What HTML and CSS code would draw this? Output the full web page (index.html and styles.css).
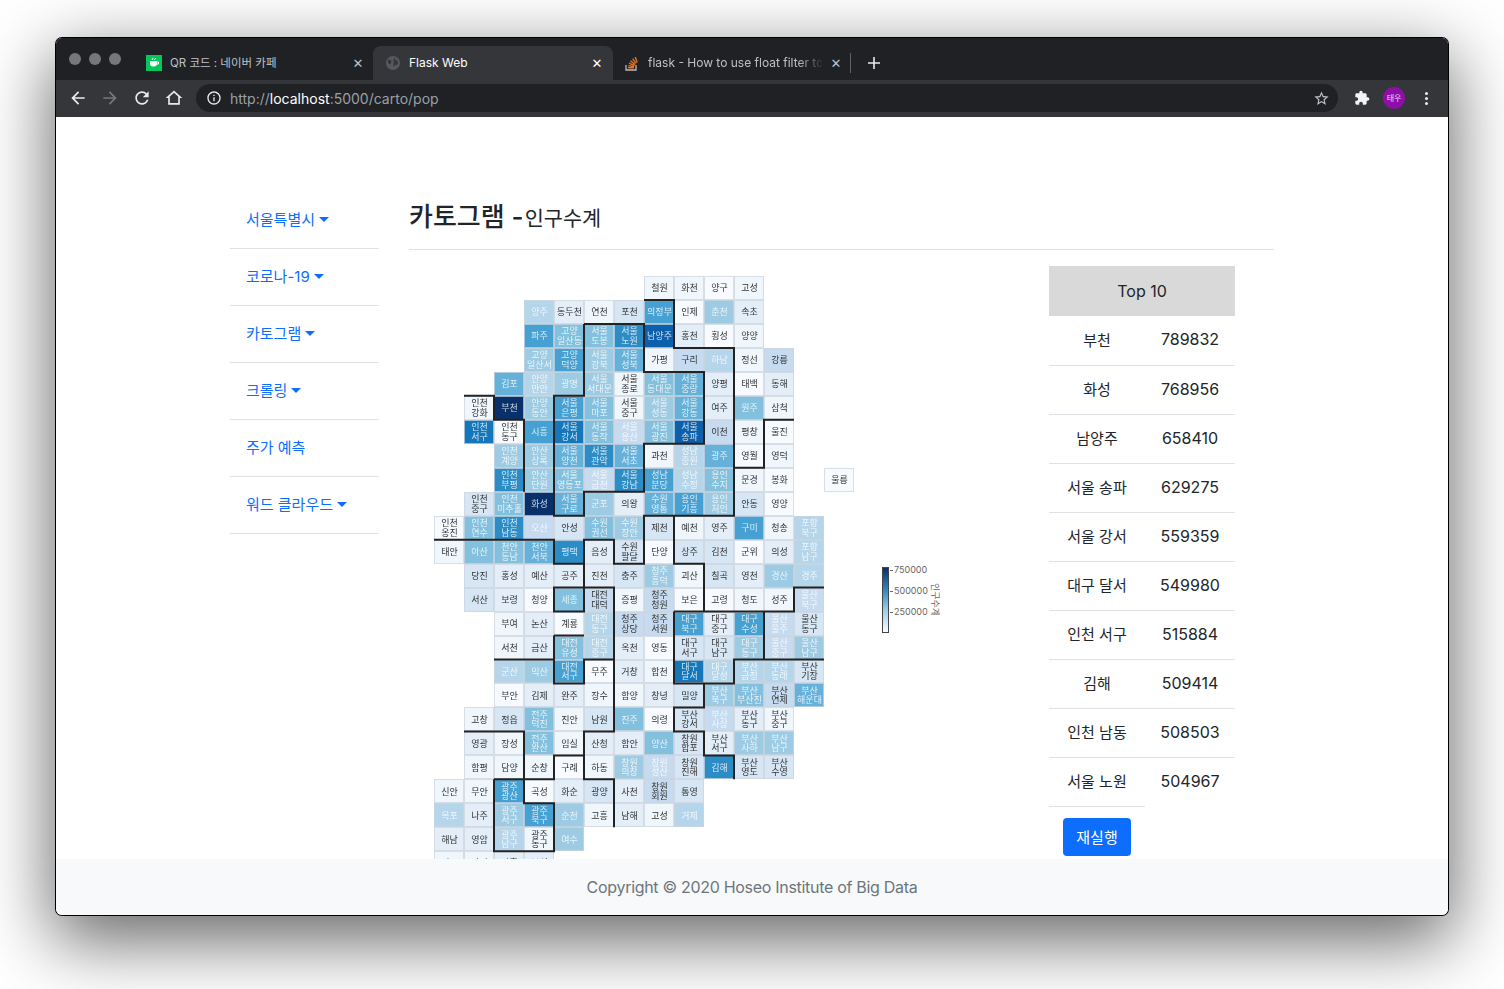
FILE: index.html
```html
<!DOCTYPE html>
<html>
  <head>
    <title>Flask Web</title>
    <link rel="stylesheet" href="styles.css">
  </head>
  <body>
    <div class="window">
      <div class="tabstrip">
        <div class="lights"><span></span><span></span><span></span></div>
        <div class="tab tab-first">
          <svg class="favicon" viewBox="0 0 16 16"><rect width="16" height="16" fill="#03c75a"/><path d="M4 6h7v2.500a3 3 0 0 1-3 3H7a3 3 0 0 1-3-3z" fill="#fff"/><path d="M11 7h1.500v2H11M6 5c0-1 1-1 1-2M8.500 5c0-1 1-1 1-2" fill="none" stroke="#fff"/></svg>
          <span class="tab-title">QR 코드 : 네이버 카페</span>
          <span class="tab-close">&#x2715;</span>
        </div>
        <div class="tab tab-active">
          <svg class="favicon" viewBox="0 0 16 16"><circle cx="8" cy="8" r="7" fill="#55585c"/><path d="M3 5c3-1 4 1 3 3s-2 1-3 0M8 14c0-3 1-4 3-4s2-2 2-3-3-2-4-5" fill="#35363a"/></svg>
          <span class="tab-title">Flask Web</span>
          <span class="tab-close">&#x2715;</span>
        </div>
        <div class="tab tab-last">
          <svg class="favicon" viewBox="0 0 16 16"><path d="M2 10v5h10v-5" fill="none" stroke="#bcbbbb" stroke-width="1.300"/><path d="M4 12.800h6M4.300 10.600l5.800 1.200M5 8.200l5.400 2.500M6.500 5.800l4.600 3.800M8.600 3.700l3.400 4.700M11.200 2l2 5.400" stroke="#e8701a" stroke-width="1.400" fill="none"/></svg>
          <span class="tab-title tab-fade">flask - How to use float filter to</span>
          <span class="tab-close">&#x2715;</span>
        </div>
        <svg class="newtab" viewBox="0 0 12 12"><path d="M6 0v12M0 6h12" stroke="#e8eaed" stroke-width="1.600"/></svg>
      </div>
      <div class="toolbar">
        <svg class="tool" viewBox="0 0 24 24"><path fill="#e8eaed" d="M20 11H7.830l5.590-5.590L12 4l-8 8 8 8 1.410-1.410L7.830 13H20v-2z"/></svg>
        <svg class="tool" viewBox="0 0 24 24"><path fill="#77787b" d="M12 4l-1.410 1.410L16.170 11H4v2h12.170l-5.580 5.590L12 20l8-8z"/></svg>
        <svg class="tool" viewBox="0 0 24 24"><path fill="#e8eaed" d="M17.650 6.350C16.200 4.900 14.210 4 12 4c-4.420 0-7.990 3.580-7.990 8s3.570 8 7.990 8c3.730 0 6.840-2.550 7.730-6h-2.080c-.82 2.330-3.040 4-5.650 4-3.310 0-6-2.690-6-6s2.690-6 6-6c1.660 0 3.140.69 4.220 1.780L13 11h7V4l-2.350 2.350z"/></svg>
        <svg class="tool" viewBox="0 0 24 24"><path fill="#e8eaed" d="M12 5.690l5 4.500V18H7v-7.810l5-4.500M12 3L2 12h3v8h14v-8h3L12 3z"/></svg>
        <div class="omnibox">
          <svg class="omni-icon" viewBox="0 0 24 24"><path fill="#e8eaed" d="M11 7h2v2h-2zm0 4h2v6h-2zm1-9C6.480 2 2 6.480 2 12s4.480 10 10 10 10-4.480 10-10S17.520 2 12 2zm0 18c-4.410 0-8-3.590-8-8s3.590-8 8-8 8 3.590 8 8-3.590 8-8 8z"/></svg>
          <span class="url">http://<b>localhost</b>:5000/carto/pop</span>
          <svg class="omni-star" viewBox="0 0 24 24"><path fill="#bdc1c6" d="M22 9.240l-7.190-.62L12 2 9.190 8.630 2 9.240l5.460 4.730L5.820 21 12 17.270 18.180 21l-1.630-7.030L22 9.240zM12 15.400l-3.760 2.270 1-4.280-3.320-2.880 4.380-.38L12 6.100l1.710 4.040 4.380.38-3.320 2.880 1 4.280L12 15.400z"/></svg>
        </div>
        <svg class="puzzle" viewBox="0 0 24 24"><path fill="#f1f3f4" d="M20.500 11H19V7c0-1.100-.9-2-2-2h-4V3.500C13 2.120 11.880 1 10.500 1S8 2.120 8 3.500V5H4c-1.100 0-1.990.9-1.990 2v3.800H3.500c1.490 0 2.700 1.210 2.700 2.700s-1.210 2.700-2.700 2.700H2V20c0 1.100.9 2 2 2h3.800v-1.500c0-1.490 1.210-2.700 2.700-2.700 1.490 0 2.700 1.210 2.700 2.700V22H17c1.100 0 2-.9 2-2v-4h1.500c1.380 0 2.500-1.120 2.500-2.500S21.880 11 20.500 11z"/></svg>
        <span class="avatar">태우</span>
        <span class="dots"><i></i><i></i><i></i></span>
      </div>

      <div class="page">
        <div class="main">
          <ul class="sidenav">
            <li><a class="caret">서울특별시</a></li>
            <li><a class="caret">코로나-19</a></li>
            <li><a class="caret">카토그램</a></li>
            <li><a class="caret">크롤링</a></li>
            <li><a>주가 예측</a></li>
            <li><a class="caret">워드 클라우드</a></li>
          </ul>
          <div class="content">
            <h2 class="title">카토그램 -<small>인구수계</small></h2>
            <div class="columns">
              <div class="map">
                <div class="grid" id="grid"></div>
                <svg class="borders" viewBox="0 0 14 25" preserveAspectRatio="none">
                  <path d="M7 1H8V3H10V10H8V12H9V14M8 14H12V13H13M8 14V17H10V16H13M11 14V16M10 8H11V6H12
                           M5 2H7V4H9V7H7V9H5V10H4V5H5V2M1 5H2V6H3V9
                           M0 11H4V12H5V11H6V12H7V10H8M5 11V14H4V13H6V16
                           M4 15H5M4 15V17H5V16H6V19H5V21H6V23M2 16H4
                           M1 19H3V21H4V20H5M2 21H3V22H4V24H2V21M9 17V18H8V19H9V20H10V21"/>
                </svg>
                <div class="legend">
                  <div class="legend-bar"></div>
                  <div class="legend-ticks">
                    <span>750000</span>
                    <span>500000</span>
                    <span>250000</span>
                  </div>
                  <div class="legend-title">인구수계</div>
                </div>
              </div>
              <table class="top">
                <colgroup>
                  <col class="col-name">
                  <col class="col-value">
                </colgroup>
                <thead>
                  <tr><th colspan="2">Top 10</th></tr>
                </thead>
                <tbody>
                  <tr><td>부천</td><td>789832</td></tr>
                  <tr><td>화성</td><td>768956</td></tr>
                  <tr><td>남양주</td><td>658410</td></tr>
                  <tr><td>서울 송파</td><td>629275</td></tr>
                  <tr><td>서울 강서</td><td>559359</td></tr>
                  <tr><td>대구 달서</td><td>549980</td></tr>
                  <tr><td>인천 서구</td><td>515884</td></tr>
                  <tr><td>김해</td><td>509414</td></tr>
                  <tr><td>인천 남동</td><td>508503</td></tr>
                  <tr class="last"><td>서울 노원</td><td>504967</td></tr>
                  <tr class="action"><td><button type="button">재실행</button></td><td></td></tr>
                </tbody>
              </table>
            </div>
          </div>
        </div>
        <div class="footer">Copyright © 2020 Hoseo Institute of Big Data</div>
      </div>
    </div>
    <script src="map.js"></script>
  </body>
</html>
```

FILE: styles.css
```css
* {
  box-sizing: border-box;
}
body {
  margin: 0;
  padding: 38px 56px 0;
  height: 989px;
  overflow: hidden;
  background-color: #ffffff;
  font-family: Inter, "Noto Sans CJK KR", sans-serif;
}
.window {
  height: 877px;
  display: flex;
  flex-direction: column;
  border-radius: 6px;
  overflow: hidden;
  background-color: #ffffff;
  box-shadow: 0 0 0 1px #000000, 0 22px 70px 4px rgba(0, 0, 0, 0.6);
}
.tabstrip {
  height: 42px;
  flex: none;
  display: flex;
  align-items: flex-end;
  background-color: #202124;
  position: relative;
}
.lights {
  width: 74px;
  height: 42px;
  flex: none;
  display: flex;
  gap: 8px;
  padding: 15px 0 0 13px;
}
.lights span {
  width: 12px;
  height: 12px;
  border-radius: 50%;
  background-color: #77777a;
}
.tab {
  height: 34px;
  display: flex;
  align-items: center;
  font-size: 12px;
  color: #bdc1c6;
}
.tab-first {
  width: 243px;
  padding: 0 0 0 16px;
  font-size: 11.500px;
}
.tab-active {
  width: 240px;
  padding: 0 0 0 12px;
  background-color: #35363a;
  border-radius: 8px 8px 0 0;
  color: #ffffff;
}
.tab-last {
  width: 238px;
  padding: 0 0 0 11px;
  border-right: 1px solid #5f6368;
  height: 20px;
  margin-bottom: 7px;
}
.favicon {
  width: 16px;
  height: 16px;
  flex: none;
  margin-right: 8px;
}
.tab-title {
  flex: 1;
  padding-bottom: 2px;
  white-space: nowrap;
  overflow: hidden;
}
.tab-fade {
  -webkit-mask-image: linear-gradient(to right, #000 150px, transparent 176px);
  mask-image: linear-gradient(to right, #000 150px, transparent 176px);
}
.tab-close {
  width: 12px;
  margin: 0 10px 0 8px;
  font-size: 13px;
  text-align: center;
  font-family: "DejaVu Sans", sans-serif;
}
.tab-first .tab-close {
  margin-right: 9px;
}
.tab-last .tab-close {
  margin-right: 8px;
}
.newtab {
  width: 12px;
  height: 12px;
  flex: none;
  margin: 0 0 11px 17px;
}
.toolbar {
  height: 37px;
  flex: none;
  display: flex;
  align-items: center;
  padding: 0 0 1px 12px;
  background-color: #35363a;
}
.tool {
  width: 20px;
  height: 20px;
  flex: none;
  margin-right: 12px;
}
.omnibox {
  width: 1142px;
  height: 28px;
  flex: none;
  display: flex;
  align-items: center;
  padding: 0 8px 0 10px;
  border-radius: 14px;
  background-color: #202124;
}
.omni-icon {
  width: 16px;
  height: 16px;
  flex: none;
  margin-right: 8px;
}
.url {
  flex: 1;
  font-size: 14px;
  color: #9aa0a6;
}
.url b {
  font-weight: 400;
  color: #ffffff;
}
.omni-star {
  width: 17px;
  height: 17px;
}
.puzzle {
  width: 16px;
  height: 16px;
  flex: none;
  margin-left: 16px;
}
.avatar {
  width: 22px;
  height: 22px;
  flex: none;
  margin-left: 13px;
  border-radius: 50%;
  background-color: #8e0fa8;
  color: #f0d0f6;
  font-size: 8px;
  line-height: 22px;
  text-align: center;
}
.dots {
  flex: none;
  display: flex;
  flex-direction: column;
  gap: 2px;
  margin-left: 20px;
}
.dots i {
  width: 3px;
  height: 3px;
  background-color: #e8eaed;
  border-radius: 50%;
}
.page {
  flex: 1;
  min-height: 0;
  display: flex;
  flex-direction: column;
}
.main {
  height: 742px;
  flex: none;
  overflow: hidden;
  display: flex;
  gap: 30px;
  padding: 75px 0 0 174px;
}
.sidenav {
  width: 149px;
  flex: none;
  margin: 0;
  padding: 0;
  list-style: none;
}
.sidenav li {
  height: 57px;
  display: flex;
  align-items: center;
  padding: 0 0 3px 16px;
  border-bottom: 1px solid #dee2e6;
}
.sidenav a {
  color: #0d6efd;
  font-size: 15px;
}
.caret::after {
  content: "";
  display: inline-block;
  margin-left: 4px;
  vertical-align: 3px;
  border-top: 5px solid #0d6efd;
  border-left: 5px solid transparent;
  border-right: 5px solid transparent;
}
.content {
  width: 865px;
  flex: none;
}
.title {
  height: 58px;
  margin: 0;
  padding-top: 6px;
  border-bottom: 1px solid #dee2e6;
  font-size: 26px;
  font-weight: 500;
  line-height: 38px;
  color: #212529;
}
.title small {
  margin-left: 1px;
  font-size: 20.800px;
  font-weight: 400;
}
.columns {
  display: flex;
}
.map {
  width: 640px;
  flex: none;
  position: relative;
  padding: 26px 0 0 25px;
}
.grid {
  display: grid;
  grid-template-columns: repeat(14, 30px);
  grid-template-rows: repeat(25, 23.970px);
  filter: blur(0.4px);
}
.cell {
  display: flex;
  align-items: center;
  justify-content: center;
  padding-left: 1px;
  border: 1px solid rgba(205, 212, 222, 0.75);
  font-size: 9px;
  line-height: 9.500px;
  text-align: center;
  white-space: pre-line;
  color: #333333;
}
.cell.white {
  color: rgba(255, 255, 255, 0.8);
}
.lv-a { background-color: #f7fbff; }
.lv-b { background-color: #eff6fc; }
.lv-c { background-color: #e3eef8; }
.lv-d { background-color: #d6e6f4; }
.lv-e { background-color: #c6dbef; }
.lv-f { background-color: #b5d5ea; }
.lv-g { background-color: #9ccbe3; }
.lv-h { background-color: #83c0de; }
.lv-i { background-color: #65b1d9; }
.lv-j { background-color: #46a0d2; }
.lv-k { background-color: #2b8cc6; }
.lv-l { background-color: #1577bb; }
.lv-m { background-color: #0b5fab; }
.lv-n { background-color: #08306b; }
.borders {
  position: absolute;
  left: 25px;
  top: 26px;
  width: 420px;
  height: 599.250px;
  overflow: visible;
}
.borders path {
  fill: none;
  stroke: #222222;
  stroke-width: 2px;
  vector-effect: non-scaling-stroke;
}
.legend {
  position: absolute;
  left: 473px;
  top: 317px;
  display: flex;
  color: #666666;
  font-size: 9px;
}
.legend-bar {
  width: 7px;
  height: 66px;
  border: 1px solid #444444;
  background: linear-gradient(to top, #f7fbff, #9ccbe3 35%, #2b8cc6 65%, #08306b);
}
.legend-ticks {
  height: 66px;
  margin: -3px 0 0 1px;
  display: flex;
  flex-direction: column;
  gap: 9px;
  line-height: 12px;
}
.legend-ticks span {
  display: flex;
  align-items: center;
  gap: 1px;
}
.legend-ticks span::before {
  content: "";
  width: 3px;
  height: 1px;
  background-color: #666666;
}
.legend-title {
  width: 12px;
  height: 66px;
  margin-left: 1px;
  writing-mode: vertical-rl;
  text-orientation: sideways;
  text-align: center;
  font-size: 9px;
  line-height: 12px;
}
.top {
  width: 186px;
  height: 0;
  flex: none;
  margin-top: 16px;
  border-collapse: collapse;
  table-layout: fixed;
  font-size: 16px;
  color: #212529;
}
.col-name {
  width: 96px;
}
.col-value {
  width: 90px;
}
.top th {
  height: 50px;
  background-color: #d9d9d9;
  font-weight: 400;
}
.top td {
  height: 49px;
  padding: 0 0 2px;
  text-align: center;
  border-bottom: 1px solid #dee2e6;
}
.top td:first-child {
  font-size: 15px;
}
.top .last td:last-child,
.top .action td {
  border-bottom: none;
}
.top .action td {
  padding: 11px 0 0;
}
.top button {
  width: 68px;
  height: 38px;
  border: none;
  border-radius: 4px;
  background-color: #0d6efd;
  color: #ffffff;
  font-family: inherit;
  font-size: 15px;
}
.footer {
  flex: 1;
  display: flex;
  align-items: center;
  justify-content: center;
  background-color: #f8f9fa;
  color: #6c757d;
  font-size: 16px;
  letter-spacing: -0.3px;
}
```

FILE: map.js
```js
// One line per row of the map: first column, then name:level (uppercase level = white text).
// A space in a name is a line break, an empty item skips a column.
const rows = [
  [7, '철원:b,화천:b,양구:a,고성:b'],
  [3, '양주:F,동두천:c,연천:b,포천:d,의정부:J,인제:a,춘천:G,속초:c'],
  [3, '파주:J,고양 일산동:H,서울 도봉:H,서울 노원:K,남양주:M,홍천:c,횡성:a,양양:b'],
  [3, '고양 일산서:G,고양 덕양:J,서울 강북:G,서울 성북:I,가평:b,구리:e,하남:F,정선:b,강릉:e'],
  [2, '김포:I,안양 만안:F,광명:G,서울 서대문:G,서울 종로:b,서울 동대문:H,서울 중랑:I,양평:c,태백:a,동해:c'],
  [1, '인천 강화:b,부천:N,안양 동안:G,서울 은평:J,서울 마포:H,서울 중구:b,서울 성동:G,서울 강동:I,여주:c,원주:H,삼척:b'],
  [1, '인천 서구:L,인천 동구:a,시흥:J,서울 강서:L,서울 동작:H,서울 용산:E,서울 광진:H,서울 송파:M,이천:e,평창:b,울진:a'],
  [2, '인천 계양:G,안산 상록:G,서울 양천:I,서울 관악:K,서울 서초:I,과천:b,성남 중원:F,광주:I,영월:a,영덕:b'],
  [2, '인천 부평:K,안산 단원:G,서울 영등포:H,서울 금천:E,서울 강남:K,성남 분당:J,성남 수정:F,용인 수지:H,문경:b,봉화:a,,울릉:a'],
  [1, '인천 중구:d,인천 미추홀:H,화성:N,서울 구로:I,군포:G,의왕:c,수원 영통:I,용인 기흥:J,용인 처인:G,안동:d,영양:a'],
  [0, '인천 옹진:a,인천 연수:H,인천 남동:K,오산:E,안성:d,수원 권선:H,수원 장안:G,제천:d,예천:b,영주:c,구미:J,청송:b,포항 북구:F'],
  [0, '태안:b,아산:H,천안 동남:H,천안 서북:I,평택:K,음성:c,수원 팔달:d,단양:a,상주:d,김천:d,군위:a,의성:c,포항 남구:F'],
  [1, '당진:d,홍성:c,예산:c,공주:c,진천:c,충주:d,청주 흥덕:G,괴산:b,칠곡:d,영천:c,경산:G,경주:F'],
  [1, '서산:d,보령:c,청양:a,세종:H,대전 대덕:e,증평:b,청주 청원:e,보은:a,고령:a,청도:b,성주:b,울산 북구:E'],
  [2, '부여:b,논산:c,계룡:a,대전 동구:F,청주 상당:e,청주 서원:e,대구 북구:J,대구 중구:c,대구 수성:J,울산 울주:E,울산 동구:d'],
  [2, '서천:b,금산:c,대전 유성:H,대전 중구:F,옥천:c,영동:a,대구 서구:d,대구 남구:d,대구 동구:G,울산 중구:E,울산 남구:G'],
  [2, '군산:F,익산:G,대전 서구:J,무주:a,거창:c,합천:b,대구 달서:L,대구 달성:F,부산 금정:F,부산 동래:F,부산 기장:d'],
  [2, '부안:a,김제:c,완주:c,장수:b,함양:b,창녕:c,밀양:d,부산 북구:G,부산 부산진:H,부산 연제:e,부산 해운대:I'],
  [1, '고창:b,정읍:d,전주 덕진:H,진안:b,남원:d,진주:H,의령:a,부산 강서:d,부산 사상:E,부산 동구:c,부산 중구:b'],
  [1, '영광:c,장성:b,전주 완산:H,임실:b,산청:c,함안:c,양산:H,창원 합포:d,부산 서구:c,부산 사하:G,부산 남구:G'],
  [1, '함평:b,담양:b,순창:b,구례:a,하동:b,창원 의창:G,창원 성산:E,창원 진해:d,김해:K,부산 영도:d,부산 수영:d'],
  [0, '신안:b,무안:b,광주 광산:J,곡성:a,화순:c,광양:d,사천:c,창원 회원:e,통영:d'],
  [0, '목포:F,나주:c,광주 서구:G,광주 북구:J,순천:G,고흥:b,남해:c,고성:b,거제:F'],
  [0, '해남:c,영암:c,광주 남구:F,광주 동구:b,여수:G'],
  [0, '진도:b,강진:b,장흥:c,보성:c']
];

const grid = document.getElementById('grid');

rows.forEach(function (row, r) {
  row[1].split(',').forEach(function (item, i) {
    if (!item) return;
    const parts = item.split(':');
    const level = parts[1];
    const lower = level.toLowerCase();
    const cell = document.createElement('div');
    cell.className = 'cell lv-' + lower + (level !== lower ? ' white' : '');
    cell.style.gridRow = r + 1;
    cell.style.gridColumn = row[0] + i + 1;
    cell.textContent = parts[0].replace(' ', '\n');
    grid.appendChild(cell);
  });
});
```
